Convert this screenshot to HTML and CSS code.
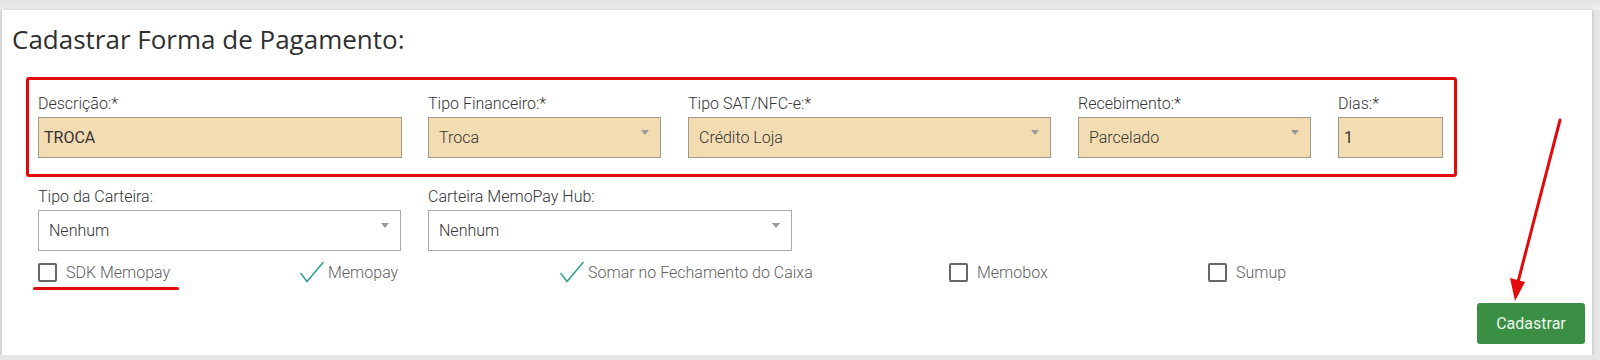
FILE: index.html
```html
<!DOCTYPE html>
<html lang="pt-BR">
  <head>
    <meta charset="UTF-8" />
    <title>Cadastrar Forma de Pagamento</title>
    <link rel="stylesheet" href="styles.css">
  </head>
  <body>
    <div class="top-band"></div>
    <div class="panel">
      <h1 class="title">Cadastrar Forma de Pagamento:</h1>

      <div class="highlight">
        <div class="field f-desc">
          <label>Descrição:*</label>
          <div class="input filled">TROCA</div>
        </div>
        <div class="field f-small">
          <label>Tipo Financeiro:*</label>
          <div class="input filled select">Troca<span class="caret"></span></div>
        </div>
        <div class="field f-wide">
          <label>Tipo SAT/NFC-e:*</label>
          <div class="input filled select">Crédito Loja<span class="caret"></span></div>
        </div>
        <div class="field f-small">
          <label>Recebimento:*</label>
          <div class="input filled select">Parcelado<span class="caret"></span></div>
        </div>
        <div class="field f-days">
          <label>Dias:*</label>
          <div class="input filled">1</div>
        </div>
      </div>

      <div class="row">
        <div class="field f-wide">
          <label>Tipo da Carteira:</label>
          <div class="input select">Nenhum<span class="caret"></span></div>
        </div>
        <div class="field f-desc">
          <label>Carteira MemoPay Hub:</label>
          <div class="input select">Nenhum<span class="caret"></span></div>
        </div>
      </div>

      <div class="checks">
        <div class="check-item c1">
          <span class="box"></span>SDK Memopay
          <span class="underline"></span>
        </div>
        <div class="check-item c2">
          <svg class="tick" width="26" height="22" viewBox="0 0 26 22"><polyline points="1.5,12 8,20.5 24.5,1" fill="none" stroke="#2e9e94" stroke-width="1.5"/></svg>Memopay
        </div>
        <div class="check-item c3">
          <svg class="tick" width="26" height="22" viewBox="0 0 26 22"><polyline points="1.5,12 8,20.5 24.5,1" fill="none" stroke="#2e9e94" stroke-width="1.5"/></svg>Somar no Fechamento do Caixa
        </div>
        <div class="check-item c4">
          <span class="box"></span>Memobox
        </div>
        <div class="check-item">
          <span class="box"></span>Sumup
        </div>
      </div>

      <div class="footer">
        <button class="btn-save">Cadastrar</button>
      </div>

      <svg class="arrow" width="60" height="200" viewBox="0 0 60 200">
        <line x1="47" y1="10" x2="5" y2="172" stroke="#e20a0a" stroke-width="3" stroke-linecap="round"/>
        <polygon points="2,191 -3,168 12,172" fill="#e20a0a"/>
      </svg>
    </div>
  </body>
</html>
```

FILE: styles.css
```css
* {
  box-sizing: border-box;
}
body {
  margin: 0;
  background-color: #e6e6e6;
  font-family: Roboto, "Liberation Sans", sans-serif;
  font-weight: 300;
  color: #333;
}
.top-band {
  height: 10px;
  background: linear-gradient(#e2e2e2, #efefef);
}
.panel {
  position: relative;
  margin-left: 2px;
  width: 1590px;
  height: 345px;
  background-color: #fff;
  box-shadow: 0 1px 4px rgba(0, 0, 0, 0.25);
}
.title {
  margin: 0 0 20px 10px;
  padding-top: 11px;
  font-family: "Open Sans", sans-serif;
  font-size: 26px;
  line-height: 36px;
  font-weight: 400;
  color: #2f2f2f;
}

.highlight {
  display: flex;
  margin-left: 24px;
  width: 1431px;
  padding: 14px 9px 16px 9px;
  border: 3px solid #e20a0a;
  border-radius: 3px;
}
.field {
  display: flex;
  flex-direction: column;
  margin-right: 27px;
}
.field label {
  font-size: 16px;
  line-height: 20px;
  color: #333;
  margin-bottom: 3px;
}
.f-desc {
  width: 364px;
}
.highlight .f-desc {
  margin-right: 26px;
}
.f-small {
  width: 233px;
}
.f-wide {
  width: 363px;
}
.f-days {
  width: 105px;
  margin-right: 0;
}

.input {
  display: flex;
  align-items: center;
  height: 41px;
  padding: 0 10px;
  border: 1px solid #aaa;
  background-color: #fff;
  font-size: 16px;
  color: #333;
}
.input.filled {
  background-color: #f4dcb2;
  border-color: #a19a8d;
  padding-left: 5px;
  font-weight: 400;
}
.input.select.filled {
  padding-left: 10px;
  font-weight: 300;
}
.select {
  position: relative;
}
.caret {
  position: absolute;
  right: 11px;
  top: 12px;
  border-left: 4px solid transparent;
  border-right: 4px solid transparent;
  border-top: 5px solid #999;
}

.row {
  display: flex;
  padding-left: 36px;
  margin-top: 10px;
}
.checks {
  display: flex;
  align-items: center;
  padding-left: 36px;
  margin-top: 10px;
  height: 22px;
  font-size: 16px;
  color: #5f5f5f;
}
.check-item {
  position: relative;
  display: flex;
  align-items: center;
}
.c1 {
  width: 261px;
}
.c2 {
  width: 260px;
}
.c3 {
  width: 390px;
}
.c4 {
  width: 259px;
}
.box {
  width: 19px;
  height: 19px;
  border: 2px solid #666;
  border-radius: 2px;
  margin-right: 9px;
}
.tick {
  margin-right: 3px;
}
.underline {
  position: absolute;
  left: -5px;
  top: 24px;
  width: 146px;
  height: 3px;
  border-radius: 2px;
  background-color: #e20a0a;
}

.footer {
  display: flex;
  justify-content: flex-end;
  padding-right: 7px;
  margin-top: 20px;
}
.btn-save {
  width: 108px;
  height: 41px;
  border: none;
  border-radius: 3px;
  background-color: #3a8f44;
  color: #eef7ee;
  font-family: Roboto, sans-serif;
  font-weight: 400;
  font-size: 16px;
}
.arrow {
  position: absolute;
  left: 1511px;
  top: 100px;
  overflow: visible;
}
```
